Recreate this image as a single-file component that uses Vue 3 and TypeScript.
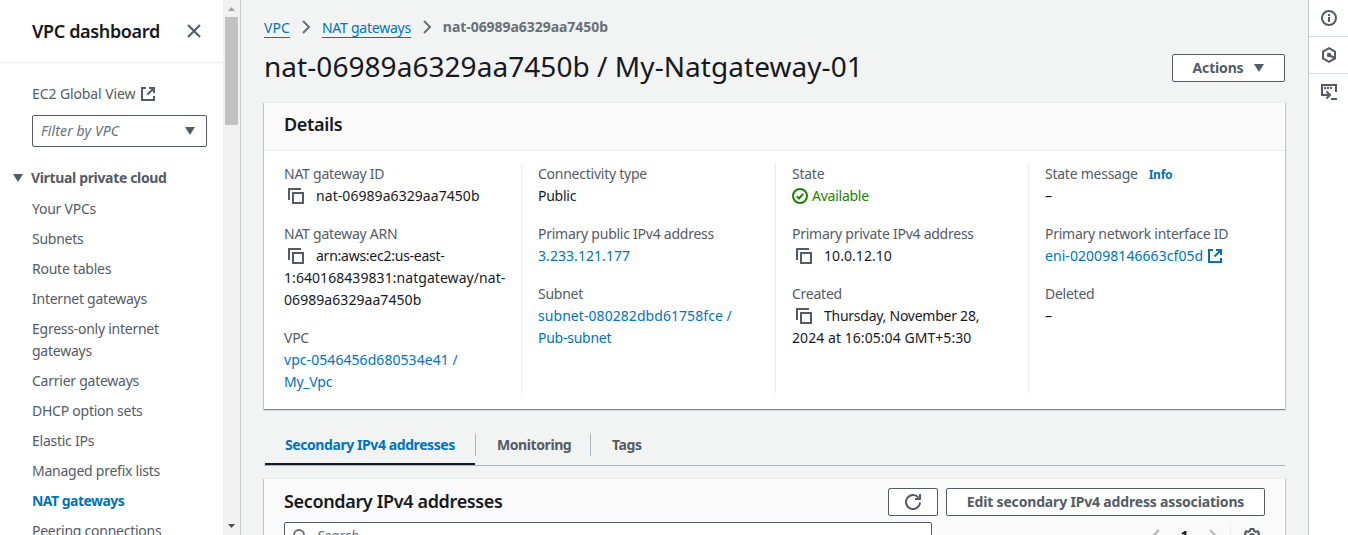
<script setup lang="ts">
interface Field {
  label: string
  lines: string[]
  info?: boolean
  copy?: boolean
  link?: boolean
  external?: boolean
  ok?: boolean
}

const navItems: string[][] = [
  ['Your VPCs'],
  ['Subnets'],
  ['Route tables'],
  ['Internet gateways'],
  ['Egress-only internet', 'gateways'],
  ['Carrier gateways'],
  ['DHCP option sets'],
  ['Elastic IPs'],
  ['Managed prefix lists'],
  ['NAT gateways'],
  ['Peering connections'],
]
const activeItem = 'NAT gateways'

const columns: Field[][] = [
  [
    { label: 'NAT gateway ID', lines: ['nat-06989a6329aa7450b'], copy: true },
    { label: 'NAT gateway ARN', lines: ['arn:aws:ec2:us-east-', '1:640168439831:natgateway/nat-', '06989a6329aa7450b'], copy: true },
    { label: 'VPC', lines: ['vpc-0546456d680534e41 /', 'My_Vpc'], link: true },
  ],
  [
    { label: 'Connectivity type', lines: ['Public'] },
    { label: 'Primary public IPv4 address', lines: ['3.233.121.177'], link: true },
    { label: 'Subnet', lines: ['subnet-080282dbd61758fce /', 'Pub-subnet'], link: true },
  ],
  [
    { label: 'State', lines: ['Available'], ok: true },
    { label: 'Primary private IPv4 address', lines: ['10.0.12.10'], copy: true },
    { label: 'Created', lines: ['Thursday, November 28,', '2024 at 16:05:04 GMT+5:30'], copy: true },
  ],
  [
    { label: 'State message', lines: ['–'], info: true },
    { label: 'Primary network interface ID', lines: ['eni-020098146663cf05d'], link: true, external: true },
    { label: 'Deleted', lines: ['–'] },
  ],
]

const tabs = ['Secondary IPv4 addresses', 'Monitoring', 'Tags']

// Lines made mostly of digits are set a little wider than prose.
const isNumeric = (line: string): boolean => (line.match(/\d/g) ?? []).length > 2
</script>

<template>
  <div class="shell">
    <aside class="sidebar">
      <div class="nav">
        <header class="nav-head">
          <h2>VPC dashboard</h2>
          <svg width="16" height="16" viewBox="0 0 16 16"><path d="M2 2l12 12M14 2L2 14" class="stroke" /></svg>
        </header>
        <div class="nav-body">
          <a class="global">EC2 Global View
            <svg width="16" height="16" viewBox="0 0 16 16"><path d="M6 2H2v12h12v-4M9 2h5v5M14 2L7.500 8.500" class="stroke" /></svg>
          </a>
          <div class="select">
            <span>Filter by VPC</span>
            <svg width="12" height="10" viewBox="0 0 12 10"><path d="M1 1h10L6 9z" class="solid" /></svg>
          </div>
          <div class="group">
            <svg width="12" height="10" viewBox="0 0 12 10"><path d="M1 1h10L6 9z" class="solid" /></svg>
            <strong>Virtual private cloud</strong>
          </div>
          <ul>
            <li v-for="item in navItems" :key="item[0]" :class="{ active: item[0] === activeItem }">
              <span v-for="line in item" :key="line">{{ line }}</span>
            </li>
          </ul>
        </div>
      </div>
      <div class="scrollbar">
        <svg width="17" height="17" viewBox="0 0 17 17"><path d="M5 11h7L8.500 7z" fill="#a3a3a3" /></svg>
        <div class="thumb"></div>
        <svg width="17" height="17" viewBox="0 0 17 17"><path d="M5 6h7l-3.500 4z" fill="#505050" /></svg>
      </div>
    </aside>

    <main>
      <nav class="crumbs">
        <a class="crumb-root">VPC</a>
        <svg width="10" height="16" viewBox="0 0 10 16"><path d="M2 2l6 6-6 6" class="stroke muted" /></svg>
        <a>NAT gateways</a>
        <svg width="10" height="16" viewBox="0 0 10 16"><path d="M2 2l6 6-6 6" class="stroke muted" /></svg>
        <b>nat-06989a6329aa7450b</b>
      </nav>
      <div class="title-row">
        <h1>nat-06989a6329aa7450b / My-Natgateway-01</h1>
        <button class="btn actions">Actions
          <svg width="12" height="10" viewBox="0 0 12 10"><path d="M1 1h10L6 9z" class="solid" /></svg>
        </button>
      </div>

      <section class="card details">
        <header><h2>Details</h2></header>
        <div class="grid">
          <div v-for="(column, i) in columns" :key="i" class="column">
            <dl v-for="field in column" :key="field.label">
              <dt>{{ field.label }}<small v-if="field.info">Info</small></dt>
              <dd v-for="(line, n) in field.lines" :key="line" :class="{ link: field.link, ok: field.ok }">
                <svg v-if="field.copy && n === 0" class="copy" width="16" height="16" viewBox="0 0 16 16"><path d="M1 12V1h12M5 5h10v10H5z" class="stroke" /></svg>
                <svg v-if="field.ok" class="check" width="16" height="16" viewBox="0 0 16 16"><circle cx="8" cy="8" r="7" class="stroke" /><path d="M4.800 8.200l2.200 2.300 4.200-4.600" class="stroke" /></svg>
                <span :class="{ numeric: isNumeric(line) }">{{ line }}</span>
                <svg v-if="field.external" class="ext" width="16" height="16" viewBox="0 0 16 16"><path d="M6 2H2v12h12v-4M9 2h5v5M14 2L7.500 8.500" class="stroke" /></svg>
              </dd>
            </dl>
          </div>
        </div>
      </section>

      <div class="tabs">
        <div v-for="(tab, i) in tabs" :key="tab" class="tab" :class="{ selected: i === 0 }"><span>{{ tab }}</span></div>
      </div>

      <section class="card secondary">
        <div class="sec-head">
          <h2>Secondary IPv4 addresses</h2>
          <button class="btn refresh" aria-label="Refresh">
            <svg width="16" height="16" viewBox="0 0 16 16"><path d="M15 8.500a7 7 0 1 1-1.500-4.800M15 0v5H10" class="stroke" /></svg>
          </button>
          <button class="btn edit">Edit secondary IPv4 address associations</button>
        </div>
        <div class="tools">
          <div class="search">
            <svg width="16" height="16" viewBox="0 0 16 16"><circle cx="7" cy="7" r="5" class="stroke muted" /><path d="M11 11l4 4" class="stroke muted" /></svg>
            <span>Search</span>
          </div>
          <div class="pager">
            <svg width="10" height="16" viewBox="0 0 10 16"><path d="M8 2L2 8l6 6" class="stroke faint" /></svg>
            <b>1</b>
            <svg width="10" height="16" viewBox="0 0 10 16"><path d="M2 2l6 6-6 6" class="stroke faint" /></svg>
            <i></i>
            <svg width="16" height="16" viewBox="0 0 16 16"><path d="M6.500 1h3l.6 2 1.700.9 2-.6 1.400 2.500-1.400 1.500v1.500l1.400 1.500-1.400 2.500-2-.6-1.700.9-.6 2h-3l-.6-2-1.700-.9-2 .6L.8 10.300l1.400-1.500V7.300L.8 5.800l1.400-2.500 2 .6L5.900 3z" class="stroke" /><circle cx="8" cy="8" r="2" class="stroke" /></svg>
          </div>
        </div>
      </section>
    </main>

    <aside class="rail">
      <div><svg width="16" height="16" viewBox="0 0 16 16"><circle cx="8" cy="8" r="7" class="stroke" /><path d="M8 4v2M8 7v5" class="stroke" /></svg></div>
      <div><svg width="16" height="16" viewBox="0 0 16 16"><path d="M8 1.200l6 3.400v6.800l-6 3.400-6-3.400V4.600z" class="stroke" /><circle cx="8" cy="8" r="2.200" class="solid" /><path d="M8 8l5.500 3" class="stroke" /></svg></div>
      <div><svg width="16" height="16" viewBox="0 0 16 16"><path d="M4 11H1V1h14v7M3 4h2M6 4h2M9 4h2M4 11h5M5.500 7.500L9 11l-3.500 3.500M10 15h6" class="stroke" /></svg></div>
    </aside>
  </div>
</template>

<style>
body {
  background: #f2f3f3;
  overflow: hidden;
}
</style>

<style scoped>
* {
  box-sizing: border-box;
}
.shell {
  display: flex;
  height: 535px;
  overflow: hidden;
  font: 14px/22px "Noto Sans", "Open Sans", sans-serif;
  letter-spacing: -0.25px;
  color: #16191f;
  background: #f2f3f3;
}
h1, h2, ul, dl, dd {
  margin: 0;
  padding: 0;
}
h2 {
  font-size: 18px;
  line-height: 22px;
  font-weight: 600;
  letter-spacing: -0.35px;
}
svg {
  flex: none;
  display: block;
}
.stroke {
  fill: none;
  stroke: #545b64;
  stroke-width: 2;
}
.solid {
  fill: #545b64;
}
.muted {
  stroke: #687078;
}
.faint {
  stroke: #aab7b8;
}
.sidebar {
  display: flex;
  flex: none;
  width: 241px;
  background: #fff;
  border-right: 1px solid #c4cacb;
  color: #545b64;
}
.nav {
  width: 223px;
}
.nav-head {
  display: flex;
  align-items: center;
  justify-content: space-between;
  height: 63px;
  padding: 0 21px 0 32px;
  border-bottom: 1px solid #eaeded;
  color: #16191f;
}
.nav-head h2 {
  padding-bottom: 1px;
}
.nav-body {
  padding: 20px 16px 0 32px;
}
.global {
  display: flex;
  align-items: center;
  gap: 5px;
  letter-spacing: -0.1px;
}
.select {
  display: flex;
  align-items: center;
  justify-content: space-between;
  height: 32px;
  margin-top: 10px;
  padding: 0 10px 0 8px;
  border: 1px solid #545b64;
  border-radius: 2px;
  font-style: italic;
  letter-spacing: 0.12px;
  color: #687078;
}
.group {
  display: flex;
  align-items: center;
  gap: 7px;
  margin: 20px 0 9px -20px;
  letter-spacing: -0.34px;
}
ul {
  display: flex;
  flex-direction: column;
  gap: 8px;
  list-style: none;
}
li span {
  display: block;
  white-space: nowrap;
}
.active {
  color: #0073bb;
  font-weight: 700;
  letter-spacing: -0.52px;
}
.scrollbar {
  display: flex;
  flex-direction: column;
  width: 17px;
  background: #f1f1f1;
}
.thumb {
  height: 108px;
  margin: 0 2px auto;
  background: #c1c1c1;
}
main {
  flex: 1;
  min-width: 0;
  padding: 16px 23px 0;
}
.crumbs {
  display: flex;
  align-items: center;
  height: 22px;
  color: #687078;
}
.crumbs a {
  height: 21px;
  line-height: 22px;
  border-bottom: 1px solid #0073bb;
  color: #0073bb;
}
.crumbs .crumb-root {
  letter-spacing: 0.08px;
}
.crumbs b {
  letter-spacing: -0.05px;
}
.crumbs svg {
  margin: 0 11px;
}
.title-row {
  display: flex;
  align-items: center;
  justify-content: space-between;
  height: 36px;
  margin: 12px 0 16px;
  white-space: nowrap;
}
h1 {
  padding-bottom: 3px;
  font-size: 28px;
  line-height: 33px;
  font-weight: 400;
  letter-spacing: 0.05px;
}
.btn {
  display: flex;
  align-items: center;
  justify-content: center;
  height: 28px;
  padding: 0;
  border: 1px solid #545b64;
  border-radius: 2px;
  background: #fff;
  color: #545b64;
  font: 700 14px/22px "Noto Sans", "Open Sans", sans-serif;
  letter-spacing: -0.17px;
  white-space: nowrap;
}
.actions {
  width: 113px;
  padding-left: 1px;
  gap: 10px;
}
.card {
  border-top: 1px solid #eaeded;
  background: #fff;
  box-shadow:
    0 1px 1px 0 rgba(0, 28, 36, 0.3),
    1px 1px 1px 0 rgba(0, 28, 36, 0.15),
    -1px 1px 1px 0 rgba(0, 28, 36, 0.15);
}
.details {
  height: 307px;
}
.details header {
  height: 48px;
  padding: 10px 20px;
  background: #fafafa;
  border-bottom: 1px solid #eaeded;
}
.grid {
  display: grid;
  grid-template-columns: 238px 254px 253px 236px;
  height: 230px;
  margin: 12px 20px;
}
.column {
  display: flex;
  flex-direction: column;
  gap: 16px;
  white-space: nowrap;
}
.column + .column {
  padding-left: 16px;
}
.column:not(:last-child) {
  border-right: 1px solid #eaeded;
}
dt {
  height: 22px;
  color: #545b64;
}
small {
  margin-left: 11px;
  font-size: 12px;
  font-weight: 700;
  color: #0073bb;
}
dd {
  display: flex;
  align-items: center;
  height: 22px;
}
.numeric {
  letter-spacing: 0.06px;
}
.copy {
  margin: 0 12px 0 4px;
}
.check {
  margin-right: 4px;
}
.ext {
  margin-left: 4px;
}
.link {
  color: #0073bb;
}
.link .stroke {
  stroke: #0073bb;
}
.ok {
  color: #1d8102;
}
.ok .stroke {
  stroke: #1d8102;
}
.tabs {
  display: flex;
  height: 42px;
  margin: 15px 0 12px;
  border-bottom: 1px solid #aab7b8;
  font-weight: 700;
  letter-spacing: -0.42px;
  color: #545b64;
}
.tab {
  display: flex;
  align-items: center;
  height: 22px;
  margin-top: 10px;
  padding: 0 20px 0 21px;
}
.tab:nth-child(2) {
  width: 116px;
  border-left: 1px solid #aab7b8;
  border-right: 1px solid #aab7b8;
}
.tab.selected {
  width: 210px;
  height: 41px;
  margin: 0 0 0 1px;
  padding: 2px 0 0 20px;
  border-bottom: 2px solid #16191f;
  color: #0073bb;
}
.secondary {
  height: 80px;
  background: #fafafa;
}
.sec-head {
  display: flex;
  align-items: center;
  padding: 9px 20px 0;
}
.sec-head h2 {
  margin-right: auto;
  padding-bottom: 2px;
}
.refresh {
  width: 50px;
  margin-right: 8px;
}
.edit {
  width: 319px;
}
.tools {
  display: flex;
  justify-content: space-between;
  padding: 6px 20px 0;
}
.search {
  display: flex;
  align-items: center;
  gap: 9px;
  width: 648px;
  height: 28px;
  padding: 0 7px;
  border: 1px solid #545b64;
  border-radius: 2px;
  background: #fff;
  font-style: italic;
  letter-spacing: 0;
  color: #687078;
}
.pager {
  display: flex;
  align-items: center;
  height: 28px;
  padding-right: 5px;
}
.pager b {
  width: 47px;
  text-align: center;
}
.pager i {
  width: 1px;
  height: 28px;
  margin: 0 13px 0 12px;
  background: #eaeded;
}
.rail {
  width: 40px;
  border-left: 1px solid #c4cacb;
  background: #fff;
}
.rail div {
  display: flex;
  align-items: center;
  justify-content: center;
  height: 37px;
  border-bottom: 1px solid #d5dbdb;
}
.rail div:last-child {
  border-color: transparent;
}
</style>
